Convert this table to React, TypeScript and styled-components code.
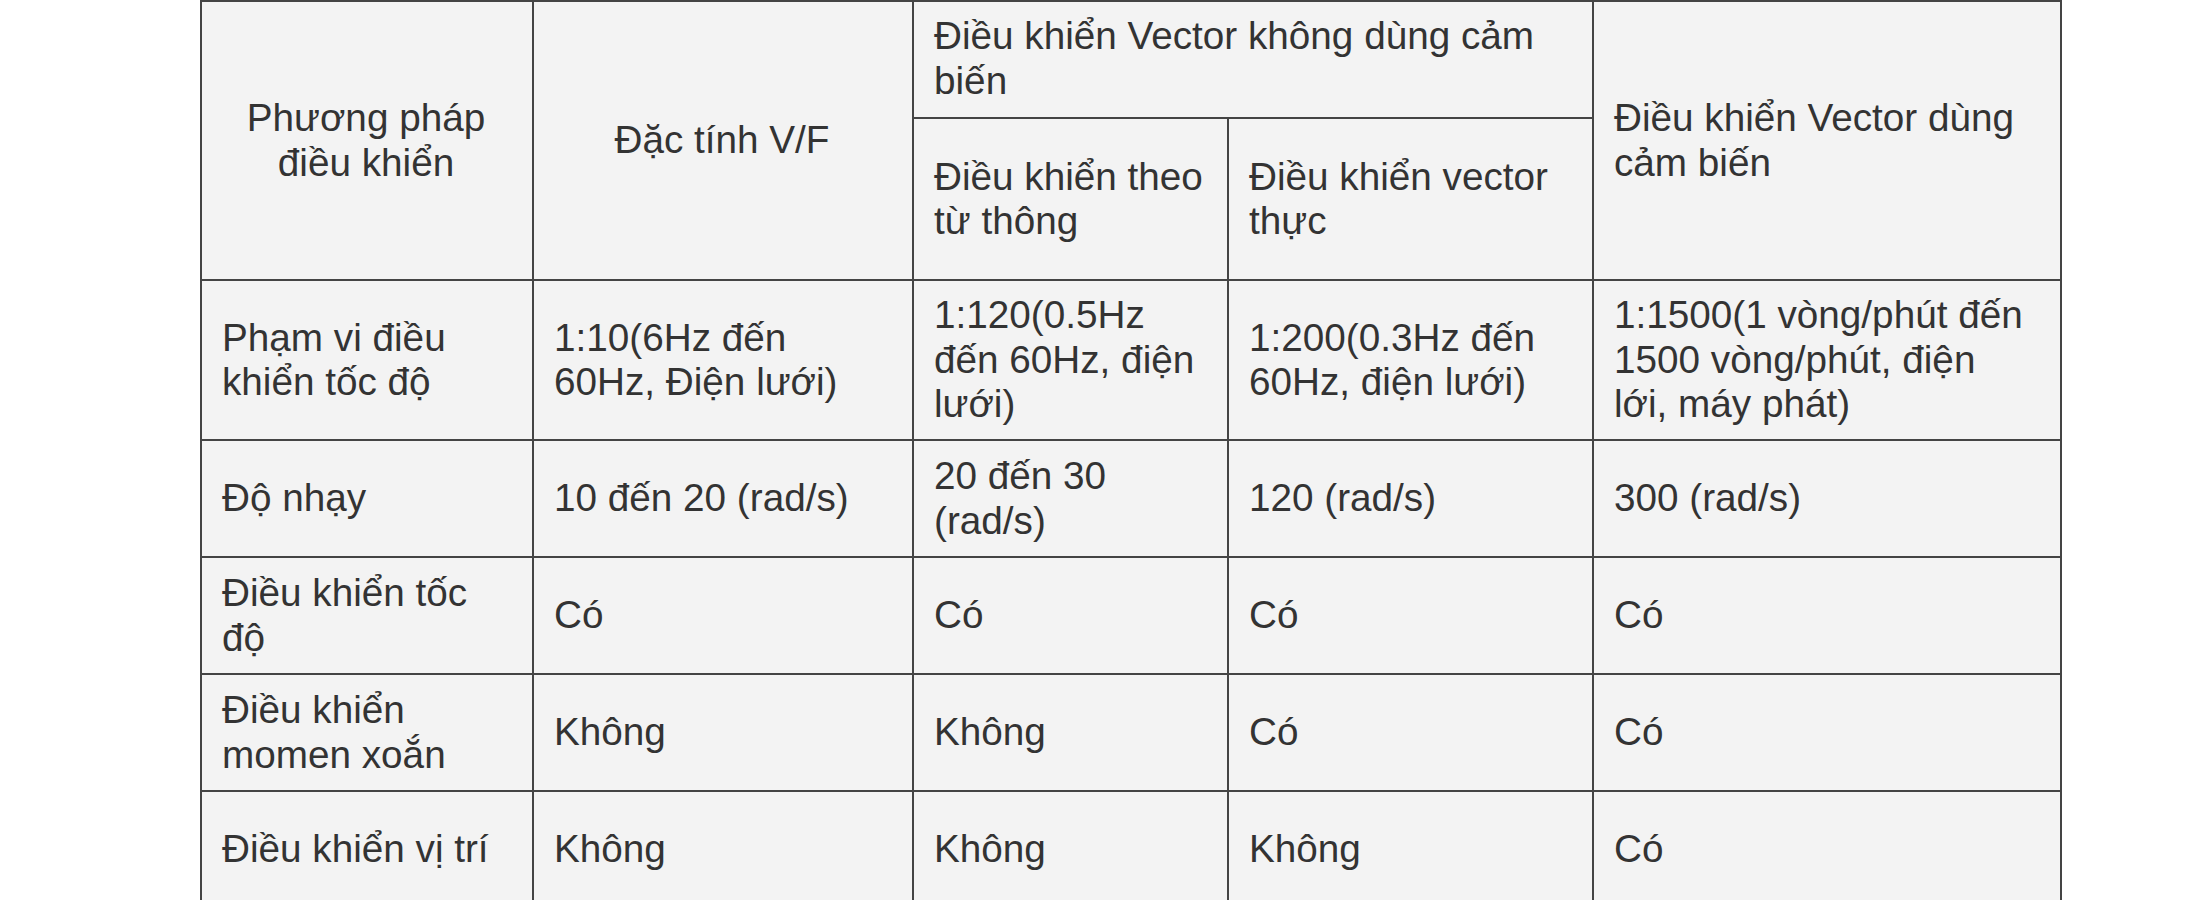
import React from "react";
import styled, { createGlobalStyle } from "styled-components";

const Global = createGlobalStyle`
  html, body {
    margin: 0;
    padding: 0;
    background: #ffffff;
  }
  body {
    font-family: "Liberation Sans", Arial, sans-serif;
  }
`;

const Page = styled.div`
  padding-left: 200px;
  background: #ffffff;
`;

const Table = styled.table`
  border-collapse: collapse;
  table-layout: fixed;
  width: 1860px;
  background: #f3f3f3;
  font-family: "Liberation Sans", Arial, sans-serif;
  font-size: 38.7px;
  line-height: 44.5px;
  color: #333333;
`;

const Row = styled.tr<{ $h: number }>`
  height: ${(p) => p.$h}px;
`;

const Cell = styled.td<{ $center?: boolean; $top?: boolean; $wideRight?: boolean }>`
  border: 2px solid #444444;
  padding: 12px ${(p) => (p.$wideRight ? 30 : 22)}px 12px 20px;
  text-align: ${(p) => (p.$center ? "center" : "left")};
  vertical-align: ${(p) => (p.$top ? "top" : "middle")};
  font-weight: normal;
  overflow-wrap: normal;
`;

const HeadCell = styled(Cell).attrs({ as: "th" })``;

type DataRow = { label: string; values: string[]; h: number };

const rows: DataRow[] = [
  {
    label: "Phạm vi điều khiển tốc độ",
    values: [
      "1:10(6Hz đến 60Hz, Điện lưới)",
      "1:120(0.5Hz đến 60Hz, điện lưới)",
      "1:200(0.3Hz đến 60Hz, điện lưới)",
      "1:1500(1 vòng/phút đến 1500 vòng/phút, điện lới, máy phát)",
    ],
    h: 160,
  },
  {
    label: "Độ nhạy",
    values: ["10 đến 20 (rad/s)", "20 đến 30 (rad/s)", "120 (rad/s)", "300 (rad/s)"],
    h: 117,
  },
  { label: "Điều khiển tốc độ", values: ["Có", "Có", "Có", "Có"], h: 117 },
  { label: "Điều khiển momen xoắn", values: ["Không", "Không", "Có", "Có"], h: 117 },
  { label: "Điều khiển vị trí", values: ["Không", "Không", "Không", "Có"], h: 116 },
];

export default function App() {
  return (
    <>
      <Global />
      <Page>
        <Table>
          <colgroup>
            <col style={{ width: 332 }} />
            <col style={{ width: 380 }} />
            <col style={{ width: 315 }} />
            <col style={{ width: 365 }} />
            <col style={{ width: 468 }} />
          </colgroup>
          <thead>
            <Row $h={117}>
              <HeadCell rowSpan={2} $center>
                Phương pháp điều khiển
              </HeadCell>
              <HeadCell rowSpan={2} $center>
                Đặc tính V/F
              </HeadCell>
              <HeadCell colSpan={2} $top>
                Điều khiển Vector không dùng cảm biến
              </HeadCell>
              <HeadCell rowSpan={2} $wideRight>
                Điều khiển Vector dùng cảm biến
              </HeadCell>
            </Row>
            <Row $h={162}>
              <HeadCell>Điều khiển theo từ thông</HeadCell>
              <HeadCell>Điều khiển vector thực</HeadCell>
            </Row>
          </thead>
          <tbody>
            {rows.map((r) => (
              <Row key={r.label} $h={r.h}>
                <Cell>{r.label}</Cell>
                {r.values.map((v, i) => (
                  <Cell key={i} $wideRight={i === r.values.length - 1}>
                    {v}
                  </Cell>
                ))}
              </Row>
            ))}
          </tbody>
        </Table>
      </Page>
    </>
  );
}
